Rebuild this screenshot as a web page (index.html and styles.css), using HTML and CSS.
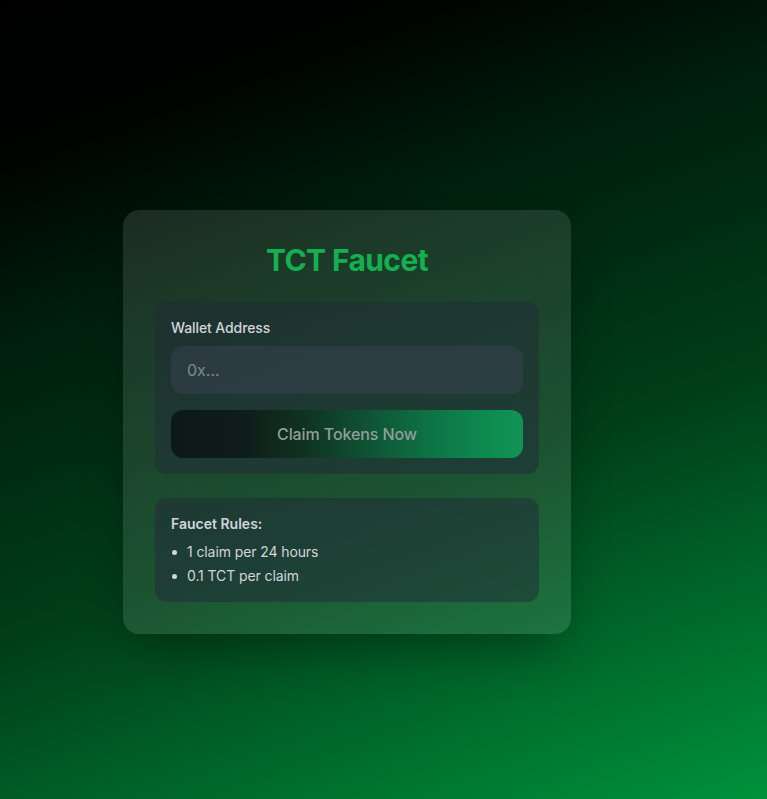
FILE: index.html
```html
<!DOCTYPE html>
<html lang="en">
<head>
<meta charset="utf-8">
<title>TCT Faucet</title>
<link rel="stylesheet" href="styles.css">
</head>
<body>
<main class="page">
  <section class="card">
    <h1 class="title">TCT Faucet</h1>
    <div class="panel">
      <label class="label" for="addr">Wallet Address</label>
      <input id="addr" class="input" type="text" placeholder="0x...">
      <button class="claim" type="button">Claim Tokens Now</button>
    </div>
    <div class="panel rules">
      <h2 class="rules-title">Faucet Rules:</h2>
      <ul class="rules-list">
        <li>1 claim per 24 hours</li>
        <li>0.1 TCT per claim</li>
      </ul>
    </div>
  </section>
</main>
</body>
</html>
```
FILE: styles.css
```css
* { box-sizing: border-box; }
html, body { margin: 0; padding: 0; }
body {
  min-height: 799px;
  font-family: Inter, "Noto Sans", "Liberation Sans", sans-serif;
  background: linear-gradient(160deg, #000000 0%, #000502 16%, #001c0b 30%, #003e19 60%, #00923b 100%);
  background-attachment: fixed;
}
.page {
  min-height: 799px;
  padding: 210px 0 0 123px;
}
.card {
  width: 448px;
  padding: 32px;
  border-radius: 16px;
  background: rgba(255, 255, 255, 0.11);
  box-shadow: 0 25px 50px -12px rgba(0, 0, 0, 0.35);
  display: flex;
  flex-direction: column;
}
.title {
  margin: 0 0 24px;
  font-size: 30px;
  line-height: 36px;
  font-weight: 700;
  letter-spacing: -0.6px;
  text-align: center;
  color: #13b052;
}
.panel {
  background: rgba(31, 41, 55, 0.5);
  border-radius: 12px;
  padding: 16px;
  display: flex;
  flex-direction: column;
}
.label {
  font-size: 14px;
  line-height: 20px;
  font-weight: 500;
  letter-spacing: -0.1px;
  color: #d1d5db;
  margin-bottom: 8px;
}
.input {
  height: 48px;
  border: none;
  outline: none;
  border-radius: 12px;
  background: rgba(55, 65, 81, 0.5);
  padding: 0 16px;
  font-family: inherit;
  font-size: 16px;
  color: #e5e7eb;
  margin-bottom: 16px;
}
.input::placeholder { color: #7f8b8d; }
.claim {
  height: 48px;
  border: none;
  border-radius: 12px;
  background: linear-gradient(to right, #0e1917 0%, #0f1c19 20%, #0f3322 38%, #0f4f32 54%, #0e6d42 70%, #0e844d 85%, #109556 100%);
  font-family: inherit;
  font-size: 16px;
  font-weight: 500;
  letter-spacing: -0.1px;
  color: #939e99;
  cursor: pointer;
}
.rules { margin-top: 24px; }
.rules-title {
  margin: 0 0 8px;
  font-size: 14px;
  line-height: 20px;
  font-weight: 600;
  color: #d1d5db;
}
.rules-list {
  list-style: none;
  margin: 0;
  padding: 0;
  display: flex;
  flex-direction: column;
  gap: 4px;
}
.rules-list li {
  display: flex;
  align-items: center;
  font-size: 14px;
  line-height: 20px;
  letter-spacing: -0.1px;
  color: #d1d5db;
}
.rules-list li::before {
  content: "";
  width: 5px;
  height: 5px;
  border-radius: 50%;
  background: #d1d5db;
  margin: 0 10px 0 1px;
}
```
